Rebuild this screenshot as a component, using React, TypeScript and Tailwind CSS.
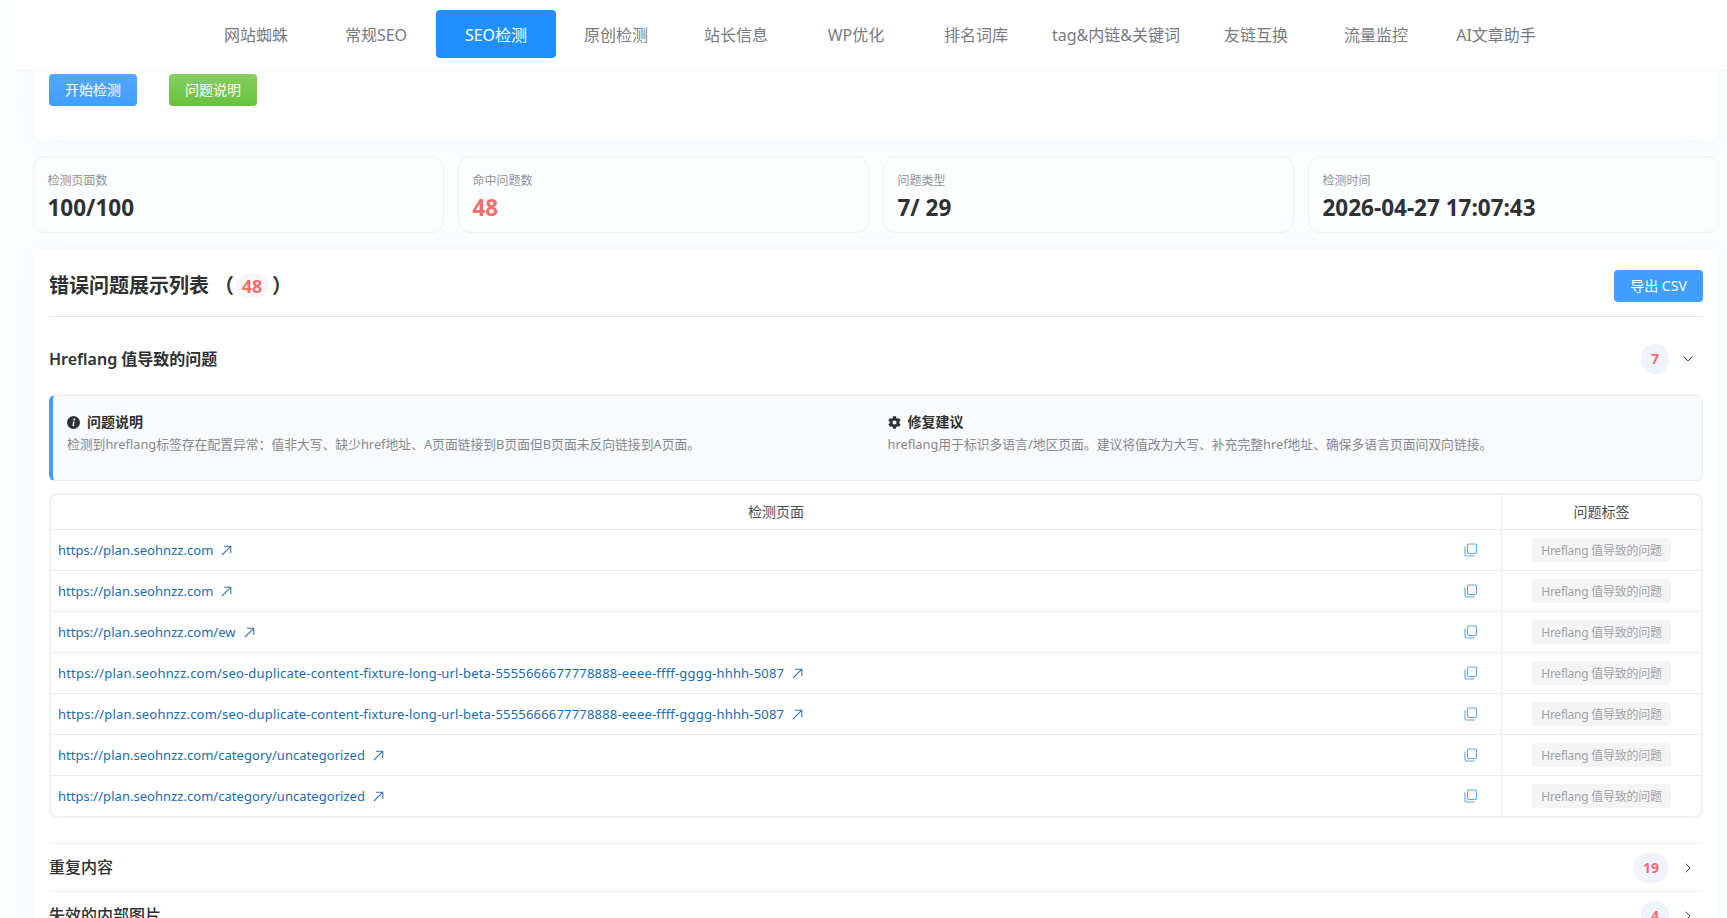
import React from 'react';
import { FaCog } from 'react-icons/fa';
import { ChevronDown, ChevronRight } from 'lucide-react';

const tabs = ['网站蜘蛛', '常规SEO', 'SEO检测', '原创检测', '站长信息', 'WP优化', '排名词库', 'tag&内链&关键词', '友链互换', '流量监控', 'AI文章助手'];

const stats = [
  { label: '检测页面数', value: '100/100', red: false },
  { label: '命中问题数', value: '48', red: true },
  { label: '问题类型', value: '7/ 29', red: false },
  { label: '检测时间', value: '2026-04-27 17:07:43', red: false },
];

const longUrl = 'https://plan.seohnzz.com/seo-duplicate-content-fixture-long-url-beta-5555666677778888-eeee-ffff-gggg-hhhh-5087';

const rows = [
  'https://plan.seohnzz.com',
  'https://plan.seohnzz.com',
  'https://plan.seohnzz.com/ew',
  longUrl,
  longUrl,
  'https://plan.seohnzz.com/category/uncategorized',
  'https://plan.seohnzz.com/category/uncategorized',
];

const InfoIcon = () => (
  <svg width="13" height="13" viewBox="0 0 13 13" className="shrink-0">
    <circle cx="6.5" cy="6.5" r="6.5" fill="#303133" />
    <circle cx="7.2" cy="3.4" r="1" fill="#fff" />
    <path d="M6 5.4h1.6L6.7 9.2c-.1.4.2.5.9.1l.1.5c-.9.6-2.3.8-2.2-.3z" fill="#fff" />
  </svg>
);

const ArrowIcon = () => (
  <svg width="11" height="11" viewBox="0 0 11 11" fill="none" stroke="#3a77b0" strokeWidth="1.1" className="shrink-0">
    <path d="M1 10L9.6 1.4M3 1.2h6.8V8" />
  </svg>
);

const CopyIcon = () => (
  <svg width="13" height="14" viewBox="0 0 13 14" fill="none" stroke="#5aa6ee" strokeWidth="1.1">
    <rect x="3.5" y="1" width="9" height="9.5" rx="1.5" />
    <path d="M1 3.5v8A1.5 1.5 0 0 0 2.5 13H10v-.6" />
  </svg>
);

function CollapseRow({ title, count, wide }: { title: string; count: number; wide: boolean }) {
  return (
    <div className="flex h-12 items-center justify-between border-t border-[#ebeef5]">
      <span className="pb-0.5 text-base font-medium text-[#303133]">{title}</span>
      <div className="flex items-center gap-[11px] pr-[7px]">
        <span className={`flex h-[30px] items-center justify-center rounded-full bg-[#eef3fc] text-sm font-bold text-[#f56c6c] ${wide ? 'w-9' : 'w-7'}`}>{count}</span>
        <ChevronRight size={16} strokeWidth={1.3} className="text-[#303133]" />
      </div>
    </div>
  );
}

export default function App() {
  return (
    <div className="h-[918px] overflow-hidden bg-[#fdfeff] font-['Noto_Sans','Noto_Sans_CJK_SC',sans-serif]">
      {/* Top tabs */}
      <nav className="relative z-10 ml-[13px] flex h-[71px] rounded-bl-sm border-b border-[#eef3f8] bg-white pl-[183px] pt-[10px]">
        {tabs.map((t) => (
          <a
            key={t}
            className={`flex h-12 items-center justify-center rounded pt-0.5 text-base ${t.startsWith('tag') ? 'w-40' : 'w-[120px]'} ${t === 'SEO检测' ? 'bg-[#1e90ff] text-white' : 'text-[#777a80]'}`}
          >
            {t}
          </a>
        ))}
      </nav>

      <div className="mx-[33px] w-[1686px]">
        {/* Action card */}
        <div className="flex gap-8 rounded-b-lg bg-white px-4 pb-[34px] pt-[3px] shadow-[0_0_24px_rgba(64,158,255,0.07)]">
          <button className="h-8 w-[88px] rounded bg-gradient-to-b from-[#53a8ff] to-[#409eff] text-sm text-white">开始检测</button>
          <button className="h-8 w-[88px] rounded bg-gradient-to-b from-[#85ce61] to-[#67c23a] text-sm text-white">问题说明</button>
        </div>

        {/* Stats */}
        <div className="relative mt-4 grid grid-cols-4 gap-[14px]">
          {stats.map((s) => (
            <div key={s.label} className="h-[77px] rounded-xl border border-[#edf0f5] bg-[#fcfdff] px-[13.5px] pt-4">
              <div className="text-xs leading-4 text-[#909399]">{s.label}</div>
              <div className={`mt-[3px] text-[22.5px] font-bold leading-8 ${s.red ? 'text-[#f56c6c]' : 'text-[#303133]'}`}>{s.value}</div>
            </div>
          ))}
        </div>

        {/* Issue list */}
        <div className="mt-[17px] rounded-lg bg-white px-4 pb-4 pt-5 shadow-[0_0_24px_rgba(64,158,255,0.07)]">
          <div className="flex items-center justify-between border-b border-[#e4e7ed] pb-[14px]">
            <div className="flex items-center text-xl font-bold text-[#303133]">
              <span>错误问题展示列表</span>
              <span className="ml-[5px]">（</span>
              <span className="ml-0.5 flex h-6 w-8 items-center justify-center rounded-full bg-[#f5f6f7] text-lg leading-none text-[#f56c6c]">48</span>
              <span className="ml-1">）</span>
            </div>
            <button className="h-8 w-[89px] rounded bg-[#409eff] text-sm text-white">导出 CSV</button>
          </div>

          <div className="flex items-center justify-between pb-[21px] pt-[27px]">
            <span className="text-base font-semibold text-[#303133]">Hreflang 值导致的问题</span>
            <div className="flex items-center gap-[11px] pr-[7px]">
              <span className="flex h-[30px] w-7 items-center justify-center rounded-full bg-[#eef3fc] text-sm font-bold text-[#f56c6c]">7</span>
              <ChevronDown size={16} strokeWidth={1.3} className="text-[#303133]" />
            </div>
          </div>

          {/* Explanation */}
          <div className="grid h-[86px] grid-cols-2 gap-5 rounded-md border border-l-4 border-[#ebeef5] border-l-[#409eff] bg-[#f8fafc] px-[14px] pt-4">
            <div>
              <div className="flex items-center gap-[7px] text-sm font-semibold leading-5 text-[#303133]">
                <InfoIcon />
                问题说明
              </div>
              <p className="mt-0.5 text-[12.8px] leading-5 text-[#86898f]">检测到hreflang标签存在配置异常：值非大写、缺少href地址、A页面链接到B页面但B页面未反向链接到A页面。</p>
            </div>
            <div>
              <div className="flex items-center gap-[7px] text-sm font-semibold leading-5 text-[#303133]">
                <FaCog size={13} className="shrink-0" />
                修复建议
              </div>
              <p className="mt-0.5 text-[12.8px] leading-5 text-[#86898f]">hreflang用于标识多语言/地区页面。建议将值改为大写、补充完整href地址、确保多语言页面间双向链接。</p>
            </div>
          </div>

          {/* Table */}
          <div className="mt-3 rounded-lg border-2 border-[#eef0f4]">
            <div className="flex h-[35px] border-b border-[#ebeef5] text-sm text-[#4b4e53]">
              <div className="flex flex-1 items-center justify-center">检测页面</div>
              <div className="flex w-[200px] items-center justify-center border-l border-[#ebeef5]">问题标签</div>
            </div>
            {rows.map((url, i) => (
              <div key={i} className={i < rows.length - 1 ? 'flex h-[41px] border-b border-[#ebeef5]' : 'flex h-10'}>
                <div className="flex flex-1 items-center justify-between pl-[7px] pr-6">
                  <a className="flex items-center gap-2 text-[13px] text-[#1b6cb0]">
                    <span className={url === longUrl ? 'pt-px tracking-[0.19px]' : 'pt-px tracking-[0.04px]'}>{url}</span>
                    <ArrowIcon />
                  </a>
                  <CopyIcon />
                </div>
                <div className="flex w-[200px] items-center justify-center border-l border-[#ebeef5]">
                  <span className="flex h-6 w-[139px] items-center justify-center rounded bg-[#f4f4f5] pt-px text-xs tracking-[-0.25px] text-[#a0a3a9]">Hreflang 值导致的问题</span>
                </div>
              </div>
            ))}
          </div>

          <div className="mt-[25px]">
            <CollapseRow title="重复内容" count={19} wide />
            <CollapseRow title="失效的内部图片" count={4} wide={false} />
          </div>
        </div>
      </div>
    </div>
  );
}
